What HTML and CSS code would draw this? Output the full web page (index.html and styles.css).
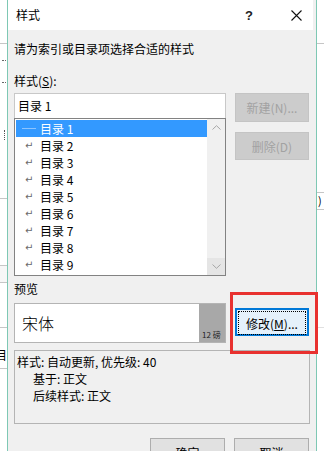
FILE: index.html
```html
<!DOCTYPE html>
<html lang="zh-CN">
<head>
    <meta charset="UTF-8">
    <meta name="viewport" content="width=device-width, initial-scale=1.0">
    <title>样式</title>
    <link rel="stylesheet" href="styles.css">
</head>
<body>
    <div class="screen">
        <div class="backdrop backdrop-left">
            <div class="rule" style="margin-top: 43px;"></div>
            <div class="dots" style="margin-top: 16px;"></div>
            <div class="dots" style="margin-top: 20px;"></div>
            <div class="vdots"></div>
            <div class="rule" style="margin-top: 58px;"></div>
            <div class="cell"></div>
            <div class="rule" style="margin-top: 44px;"></div>
            <div class="glyph">目</div>
            <div class="rule" style="margin-top: 6px;"></div>
        </div>

        <div class="dialog">
            <div class="titlebar">
                <span class="title">样式</span>
                <span class="help">?</span>
                <span class="close">
                    <svg width="11" height="11" viewBox="0 0 11 11">
                        <path d="M0.5 0.5 L10.5 10.5 M10.5 0.5 L0.5 10.5" stroke="#111" stroke-width="1.1" fill="none"/>
                    </svg>
                </span>
            </div>

            <div class="body">
                <p class="intro">请为索引或目录项选择合适的样式</p>

                <div class="main">
                    <div class="left">
                        <div class="label">样式(<u>S</u>):</div>
                        <div class="style-input">目录 1</div>
                        <div class="listbox">
                            <ul class="items">
                                <li class="item selected"><span class="mark-line"></span>目录 1</li>
                                <li class="item"><span class="mark">↵</span>目录 2</li>
                                <li class="item"><span class="mark">↵</span>目录 3</li>
                                <li class="item"><span class="mark">↵</span>目录 4</li>
                                <li class="item"><span class="mark">↵</span>目录 5</li>
                                <li class="item"><span class="mark">↵</span>目录 6</li>
                                <li class="item"><span class="mark">↵</span>目录 7</li>
                                <li class="item"><span class="mark">↵</span>目录 8</li>
                                <li class="item"><span class="mark">↵</span>目录 9</li>
                            </ul>
                            <div class="scrollbar">
                                <span class="arrow">
                                    <svg width="9" height="5" viewBox="0 0 9 5"><path d="M0.5 4.5 L4.5 0.7 L8.5 4.5" stroke="#a6a6a6" fill="none"/></svg>
                                </span>
                                <span class="arrow arrow-hover">
                                    <svg width="9" height="5" viewBox="0 0 9 5"><path d="M0.5 0.5 L4.5 4.3 L8.5 0.5" stroke="#a6a6a6" fill="none"/></svg>
                                </span>
                            </div>
                        </div>
                        <div class="label preview-label">预览</div>
                        <div class="preview">
                            <span class="preview-text">宋体</span>
                            <span class="preview-size">12 磅</span>
                        </div>
                    </div>

                    <div class="right">
                        <button class="btn btn-new" disabled>新建(N)...</button>
                        <button class="btn btn-delete" disabled>删除(D)</button>
                        <button class="btn btn-modify"><span class="focus">修改(<u>M</u>)...</span></button>
                        <div class="highlight"></div>
                    </div>
                </div>

                <div class="description">
                    <div>样式: 自动更新, 优先级: 40</div>
                    <div class="indent">基于: 正文</div>
                    <div class="indent">后续样式: 正文</div>
                </div>

                <div class="actions">
                    <button class="btn btn-action">确定</button>
                    <button class="btn btn-action">取消</button>
                </div>
            </div>
        </div>

        <div class="backdrop backdrop-right">
            <div class="rule" style="margin-top: 43px;"></div>
            <div class="rule" style="margin-top: 148px;"></div>
            <div class="glyph-right">)</div>
            <div class="rule" style="margin-top: 2px;"></div>
            <div class="rule faint" style="margin-top: 117px;"></div>
        </div>
    </div>
</body>
</html>
```

FILE: styles.css
```css
body {
    margin: 0;
    font-family: "Noto Sans CJK SC", "Microsoft YaHei", sans-serif;
    font-size: 12px;
    color: #000;
    background-color: #fff;
}
.screen {
    display: flex;
    width: 324px;
    height: 451px;
    overflow: hidden;
}

/* document behind the dialog */
.backdrop {
    display: flex;
    flex-direction: column;
    background-color: #fff;
}
.backdrop-left {
    width: 7px;
}
.backdrop-right {
    flex: 1;
}
.rule {
    height: 1px;
    background-color: #c6c6c6;
}
.rule.faint {
    background-color: #e0e0e0;
}
.dots {
    height: 1px;
    margin-left: 2px;
    border-top: 1px dotted #666;
    width: 4px;
}
.vdots {
    margin: 46px 0 0 4px;
    width: 1px;
    height: 10px;
    border-left: 1px dotted #555;
}
.cell {
    margin-top: 66px;
    height: 16px;
    border-top: 1px solid #c6c6c6;
    border-bottom: 1px solid #c6c6c6;
    background-color: #f7f7f7;
}
.glyph {
    margin-top: 20px;
    margin-left: -5px;
    line-height: 14px;
}
.glyph-right {
    line-height: 14px;
    font-size: 11px;
    margin-left: 1px;
}

/* dialog */
.dialog {
    position: relative;
    width: 308px;
    flex-shrink: 0;
    background-color: #f0f0f0;
    border-left: 1px solid #7ec8b4;
    border-right: 1px solid #7ec8b4;
}
.titlebar {
    display: flex;
    align-items: center;
    height: 30px;
    background-color: #fff;
    margin-right: 3px;
}
.title {
    margin-left: 8px;
    flex: 1;
    line-height: 16px;
}
.help {
    font-family: "Liberation Sans", Arial, sans-serif;
    font-size: 13px;
    font-weight: bold;
    color: #222;
    width: 10px;
    margin-right: 36px;
}
.close {
    display: flex;
    margin-right: 11px;
}

.body {
    padding: 0 6px;
}
.intro {
    margin: 11px 0 0 0;
    line-height: 16px;
}
.main {
    display: flex;
    margin-top: 16px;
}
.left {
    width: 212px;
}
.label {
    line-height: 16px;
    margin-bottom: 4px;
}
.style-input {
    height: 24px;
    line-height: 24px;
    padding-left: 3px;
    background-color: #fff;
    border: 1px solid #c8c8c8;
    border-bottom: none;
}
.listbox {
    display: flex;
    height: 156px;
    border: 1px solid #828282;
    background-color: #fff;
}
.items {
    list-style: none;
    margin: 0;
    padding: 1px 0 0 1px;
    flex: 1;
}
.item {
    display: flex;
    align-items: center;
    height: 17px;
    line-height: 17px;
}
.item.selected {
    background-color: #3399ff;
    color: #fff;
}
.mark {
    width: 13px;
    margin-left: 9px;
    margin-right: 2px;
    font-family: "DejaVu Sans", sans-serif;
    font-size: 10px;
    color: #6a6a6a;
}
.mark-line {
    width: 14px;
    height: 1px;
    margin-left: 6px;
    margin-right: 4px;
    background-color: #8cc4ff;
}
.scrollbar {
    display: flex;
    flex-direction: column;
    justify-content: space-between;
    width: 18px;
    background-color: #f0f0f0;
}
.arrow {
    display: flex;
    align-items: center;
    justify-content: center;
    height: 17px;
}
.arrow-hover {
    background-color: #e5e5e5;
}
.preview-label {
    margin-top: 5px;
    margin-bottom: 6px;
}
.preview {
    display: flex;
    height: 38px;
    background-color: #fff;
    border: 1px solid #b4b4b4;
}
.preview-text {
    flex: 1;
    padding-left: 7px;
    font-size: 16px;
    font-weight: 300;
    line-height: 38px;
}
.preview-size {
    display: flex;
    align-items: flex-end;
    width: 23px;
    padding: 0 0 2px 3px;
    background-color: #a8a8a8;
    font-size: 8px;
    line-height: 10px;
    color: #222;
}

.right {
    position: relative;
    display: flex;
    flex-direction: column;
    width: 74px;
    margin-left: 9px;
    padding-top: 20px;
}
.btn {
    font-family: "Noto Sans CJK SC", "Microsoft YaHei", sans-serif;
    font-size: 12px;
    padding: 0;
    height: 28px;
    border: 1px solid #adadad;
    background-color: #e1e1e1;
    color: #000;
}
.btn-new,
.btn-delete {
    background-color: #cccccc;
    border-color: #c4c4c4;
    color: #a2a2a2;
}
.btn-new {
    height: 29px;
}
.btn-delete {
    margin-top: 10px;
}
.btn-modify {
    margin-top: 148px;
    border: 2px solid #0078d7;
    background-color: #e5f1fb;
    padding: 1px;
}
.focus {
    display: flex;
    align-items: center;
    justify-content: center;
    height: 100%;
    border: 1px dotted #000;
}
.highlight {
    position: absolute;
    left: -5px;
    top: 219px;
    width: 82px;
    height: 56px;
    border: 3px solid #e8312f;
}

.description {
    margin-top: 7px;
    height: 70px;
    padding: 2px 2px 0 2px;
    border: 1px solid #b4b4b4;
    line-height: 17px;
}
.indent {
    padding-left: 16px;
}
.actions {
    display: flex;
    justify-content: flex-end;
    gap: 9px;
    margin-top: 14px;
    padding-right: 1px;
}
.btn-action {
    width: 75px;
}
```
